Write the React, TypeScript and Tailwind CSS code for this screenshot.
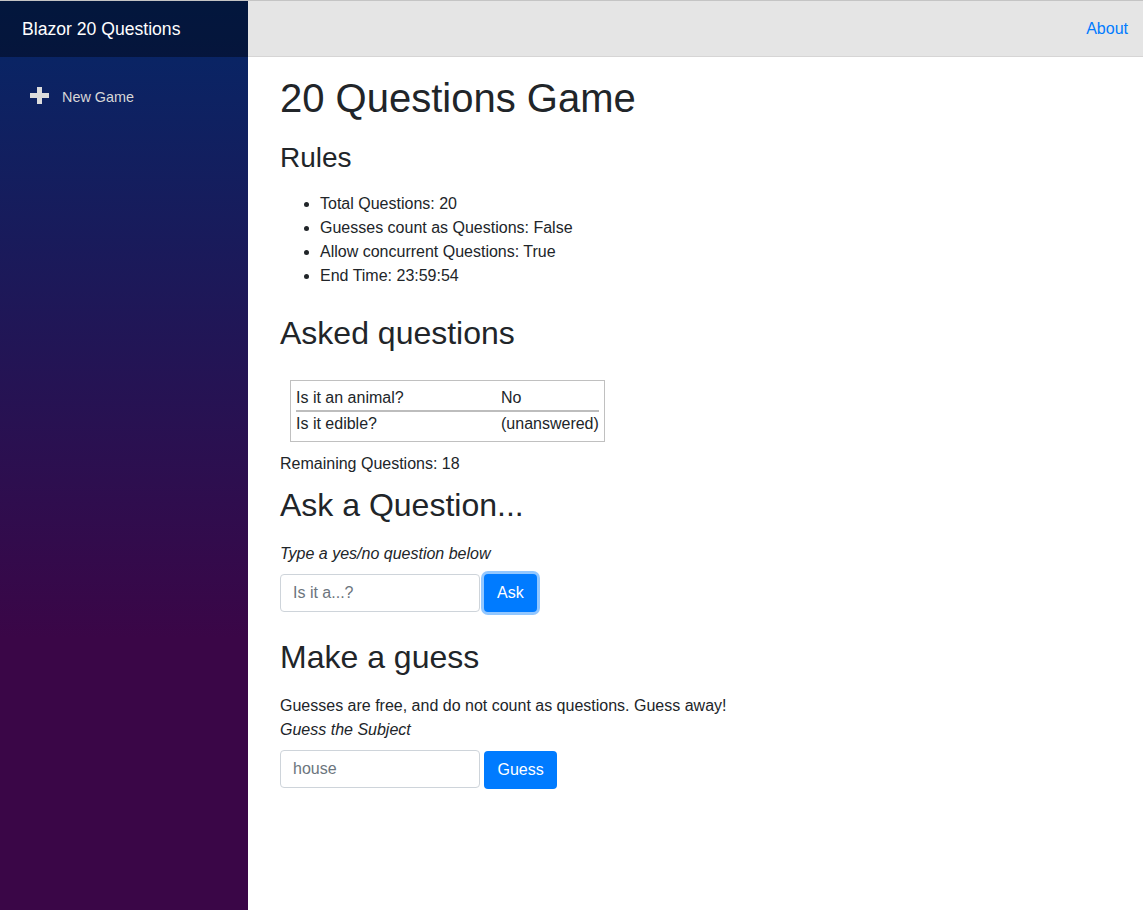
import React from 'react';

const rules = [
  'Total Questions: 20',
  'Guesses count as Questions: False',
  'Allow concurrent Questions: True',
  'End Time: 23:59:54',
];

const asked = [
  { q: 'Is it an animal?', a: 'No' },
  { q: 'Is it edible?', a: '(unanswered)' },
];

export default function App() {
  return (
    <div className="flex min-h-screen border-t border-[#c4c4c4] font-['Liberation_Sans',Arial,sans-serif] text-[16px] text-[#212529]">
      {/* ==================== Sidebar ==================== */}
      <aside className="w-[248px] shrink-0 bg-[linear-gradient(180deg,rgb(5,39,103)_0%,#3a0647_70%)]">
        <div className="h-[56px] flex items-center pl-[22px] bg-black/40">
          <span className="text-white text-[17.6px]">Blazor 20 Questions</span>
        </div>
        <nav className="pt-[17px]">
          <a className="flex items-center h-[48px] pl-[30px] text-[#d7d7d7] text-[14.4px]">
            <svg width="19" height="17" viewBox="0 0 19 17" className="mr-[13px] -mt-[5px]">
              <rect x="0" y="6" width="19" height="5" fill="#dcdcdc" />
              <rect x="7" y="0" width="5" height="17" fill="#dcdcdc" />
            </svg>
            New Game
          </a>
        </nav>
      </aside>

      {/* ==================== Main ==================== */}
      <main className="flex-1">
        <div className="h-[56px] bg-[#e5e5e5] border-b border-[#d6d5d5] flex items-center justify-end pr-[15px]">
          <a className="text-[#007bff]">About</a>
        </div>

        <div className="px-8 pt-[17px]">
          <h1 className="text-[40px] leading-[48px]">20 Questions Game</h1>

          <h3 className="mt-[19px] text-[28px] leading-[34px]">Rules</h3>
          <ul className="mt-[17px] pl-[40px] list-disc leading-[24px]">
            {rules.map((r) => (
              <li key={r}>{r}</li>
            ))}
          </ul>

          <h2 className="mt-[26px] text-[32px] leading-[38px]">Asked questions</h2>
          <div className="mt-[28px] ml-[10px] w-fit border border-[#c0c0c0] pt-[5px] pb-[5px] px-[5px]">
            <table className="border-collapse">
              <tbody>
                {asked.map((row, i) => (
                  <tr key={row.q} className={i === 0 ? 'border-b-2 border-[#bdbdbd]' : ''}>
                    <td className="w-[205px] h-[24px] p-0 align-middle">{row.q}</td>
                    <td className="h-[24px] p-0 align-middle">{row.a}</td>
                  </tr>
                ))}
              </tbody>
            </table>
          </div>
          <p className="mt-[10px] leading-[24px]">Remaining Questions: 18</p>

          <h2 className="mt-[10px] text-[32px] leading-[38px]">Ask a Question...</h2>
          <p className="mt-[18px] italic leading-[24px]">Type a yes/no question below</p>
          <div className="mt-[8px] flex items-center gap-[4px]">
            <input
              placeholder="Is it a...?"
              className="w-[200px] h-[38px] px-[12px] border border-[#ced4da] rounded-[4px] placeholder:text-[#6c757d] outline-none"
            />
            <button className="h-[38px] px-[13px] rounded-[4px] bg-[#007bff] text-white shadow-[0_0_0_3px_rgba(38,143,255,0.5)]">
              Ask
            </button>
          </div>

          <h2 className="mt-[26px] text-[32px] leading-[38px]">Make a guess</h2>
          <p className="mt-[18px] leading-[24px]">Guesses are free, and do not count as questions. Guess away!</p>
          <p className="italic leading-[24px]">Guess the Subject</p>
          <div className="mt-[8px] flex items-start gap-[4px]">
            <input
              placeholder="house"
              className="w-[200px] h-[38px] px-[12px] border border-[#ced4da] rounded-[4px] placeholder:text-[#6c757d] outline-none"
            />
            <button className="mt-[1px] h-[38px] px-[13.5px] rounded-[4px] bg-[#007bff] text-white">Guess</button>
          </div>
        </div>
      </main>
    </div>
  );
}
